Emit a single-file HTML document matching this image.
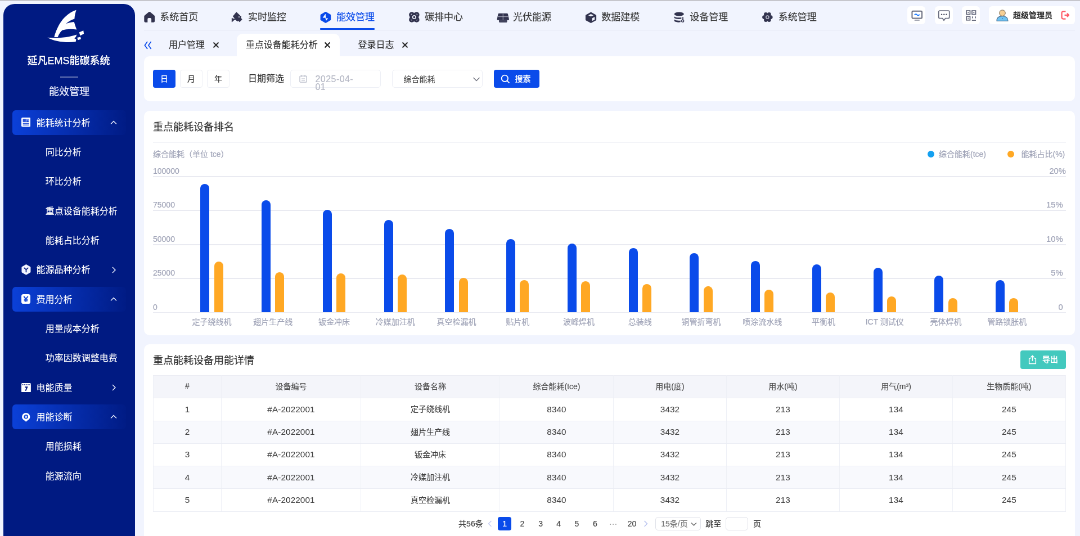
<!DOCTYPE html>
<html lang="zh-CN">
<head>
<meta charset="utf-8">
<title>延凡EMS能碳系统</title>
<style>
*{box-sizing:border-box;margin:0;padding:0}
html,body{width:1080px;height:536px;overflow:hidden;background:#f1f4fe}
body{font-family:"Liberation Sans","Noto Sans CJK SC",sans-serif;color:#333;position:relative}
#app{-webkit-text-stroke-width:0.18px;will-change:transform;position:absolute;left:0;top:0;width:1920px;height:953px;transform:scale(0.5625);transform-origin:0 0;background:#f1f4fe;overflow:hidden}
#app div,#app span,#app svg{position:absolute}
.topline{left:0;top:0;width:1920px;height:2px;background:#c6c6cc}
/* sidebar */
#side{left:6px;top:6.5px;width:234px;height:960px;background:#001a82;border-radius:20px 20px 0 0;color:#fff}
#side .title{left:-1px;width:234px;top:87.8px;text-align:center;font-size:18px;font-weight:500;-webkit-text-stroke:0.25px #fff;line-height:28px;white-space:nowrap}
#side .divider{left:101px;top:129.5px;width:32px;height:2px;background:rgba(255,255,255,.4)}
#side .module{left:0;width:234px;top:142.7px;text-align:center;font-size:18px;line-height:28px;color:#eef1ff}
.mi{-webkit-text-stroke-width:0.08px;left:16px;width:202px;height:44px;line-height:44px;font-size:16px;color:#fff;border-radius:6px;white-space:nowrap}
.mi.on{background:linear-gradient(90deg,#0b40d8 0%,rgba(11,64,216,.03) 100%)}
.mi .t{left:42.5px;top:0.7px}
.mi.sub .t{left:58.8px}
/* top nav */
.nav{top:15.7px;height:30px;line-height:30px;font-size:17px;color:#3a3a3a;white-space:nowrap}
.nav.on{color:#0a4bea}
.navul{top:50.3px;height:3.2px;background:#0a4bea;border-radius:1px}
.navline{left:256px;top:53px;width:1655px;height:1.2px;background:#e0e3ef}
.tb{top:11.2px;width:32px;height:32.3px;border-radius:6px;background:#fff}
.user{left:1758px;top:11.2px;width:153px;height:32.3px;border-radius:6px;background:#fff;font-size:14px;font-weight:500;color:#222;line-height:32px;white-space:nowrap}
/* tabs */
.tab{top:60px;height:40px;line-height:40px;font-size:16px;color:#333;white-space:nowrap}
.tab.on{background:#fff;border-radius:10px 10px 0 0}
/* cards */
.org{width:0;height:0}
.card{left:255.5px;width:1655.5px;background:#fff;border-radius:10px}
.btn{height:32px;line-height:32px;text-align:center;font-size:14px;border-radius:4px;white-space:nowrap}
.btn.w{background:#fff;border:1px solid #edeff5;color:#333;line-height:30px}
.btn.p{background:#0a4bea;color:#fff}
.inp{height:32px;border:1px solid #edeff5;border-radius:5px;background:#fff;font-size:14px;color:#333;line-height:30px;white-space:nowrap}
.h{font-size:18px;font-weight:400;-webkit-text-stroke-width:0.2px;color:#333;line-height:28px;white-space:nowrap}
.hr{left:16.5px;width:1623px;height:1px;background:#f1f2f7}
/* chart */
.grid{left:272px;width:1623px;height:1.7778px;background:#e9eaf1}
.yl,.yr,.xl,.lg{font-size:14px;line-height:20px;color:#9ea2b6;white-space:nowrap}
.yl{left:272px}
.yr{left:1795px;width:100px;text-align:right;font-size:14.8px}
.xl{width:120px;text-align:center}
.bar{width:16px;border-radius:8px 8px 0 0}
.bar.b{background:#0a4bea}
.bar.o{background:#ffa824}
/* table */
table{position:absolute;border-collapse:collapse;table-layout:fixed;font-size:14px;color:#3d3d3d}
td,th{border:1px solid #ebedf4;border-left-color:#eef0f6;border-right-color:#eef0f6;text-align:center;height:40.3px;padding:0 0 3px 0;font-weight:400;white-space:nowrap}
td.n{font-size:15.3px;letter-spacing:0.1px;padding-bottom:0.6px;-webkit-text-stroke-width:0.05px;color:#424242}
th{background:#f4f5fa;color:#4d4d4d}
tr.alt td{background:#f8f9fd}
.pg{font-size:14px;line-height:24px;color:#444;white-space:nowrap;text-align:center}

</style>
</head>
<body>
<div id="app">
<div class="topline"></div>
<div id="side">
  <svg style="left:72.22px;top:4.17px" width="78.22" height="71.11" viewBox="44 6 44 40">
    <path d="M76.4 9.8 C66 13.5 58.5 22 54.3 36.9 L57.9 36.9 C59.2 33.8 60.4 31.8 62.2 30.2 C66 28.8 72 28.6 76.8 29.4 C75.6 26.5 74.8 24 74.3 21.8 C71 22 68 22.8 66 23.6 C68.5 21.3 71.5 19.6 74.6 18.6 C74.8 15.5 75.5 12.5 76.4 9.8 Z" fill="#fff"/>
    <path d="M47.6 37.3 C57 38.3 68 37.5 76.8 34.4 C76.6 36 75.6 37.5 74.5 38.2 L76.3 39 C76.2 40 76 41 75.8 41.6 C66 42.6 55 41.5 47.6 37.3 Z" fill="#fff"/>
    <path d="M79.3 32.2 L83.5 30.3 L84 33.5 L80.3 35.6 Z M77.3 37.5 L80.6 36.6 L81.1 38.9 L78.1 39.9 Z" fill="#fff"/>
  </svg>
  <div class="title">延凡EMS能碳系统</div>
  <div class="divider"></div>
  <div class="module">能效管理</div>
<div class="mi on" style="top:189.63px"><span class="t">能耗统计分析</span><svg style="left:174px;top:17px" width="12" height="9" viewBox="0 0 12 9" fill="none" stroke="#f0f3ff" stroke-width="1.400"><path d="M1 7.500l5-5 5 5"/></svg></div>
<svg style="left:31.51px;top:202.92px" width="16.36" height="16.53" viewBox="0 0 18 18" preserveAspectRatio="none"><rect x="0" y="0" width="18" height="18" rx="2.200" fill="#fff"/><rect x="3" y="3" width="12" height="5.600" fill="#6d8cf0"/><path d="M3 3h5.500v5.600H3z" fill="#2f55d8"/><path d="M9.500 8.600l2.500-3.400 2.800 3.400z" fill="#2247cc"/><path d="M3 11.200h12M3 14.400h12" stroke="#2a52d8" stroke-width="1.500" fill="none"/></svg>
<div class="mi sub" style="top:241.95px"><span class="t">同比分析</span></div>
<div class="mi sub" style="top:294.27px"><span class="t">环比分析</span></div>
<div class="mi sub" style="top:346.59px"><span class="t">重点设备能耗分析</span></div>
<div class="mi sub" style="top:398.91px"><span class="t">能耗占比分析</span></div>
<div class="mi " style="top:451.23px"><span class="t">能源品种分析</span><svg style="left:176px;top:16px" width="9" height="12" viewBox="0 0 9 12" fill="none" stroke="#f0f3ff" stroke-width="1.400"><path d="M2 1l5 5-5 5"/></svg></div>
<svg style="left:31.69px;top:463.72px" width="16.89" height="18.67" viewBox="0 0 19 21" preserveAspectRatio="none"><path d="M9.500 1.200 17.300 5.700v9.600L9.500 19.800 1.700 15.300V5.700z" fill="#f3f5ff" stroke="#f3f5ff" stroke-width="2.400" stroke-linejoin="round"/><path d="M5.800 7.200l3.700 3.300 3.700-3.300M9.500 10.500v4.700" stroke="#00157f" stroke-width="1.900" fill="none" stroke-linecap="round"/></svg>
<div class="mi on" style="top:503.55px"><span class="t">费用分析</span><svg style="left:174px;top:17px" width="12" height="9" viewBox="0 0 12 9" fill="none" stroke="#f0f3ff" stroke-width="1.400"><path d="M1 7.500l5-5 5 5"/></svg></div>
<svg style="left:32.22px;top:516.88px" width="16.00" height="17.07" viewBox="0 0 18 19" preserveAspectRatio="none"><rect x="0" y="0" width="18" height="19" rx="4" fill="#fff"/><path d="M4.800 4.200 9 9.200l4.200-5" stroke="#0a3fd6" stroke-width="2.200" fill="none"/><path d="M9 9.200v6M5.200 10h7.600M5.200 13h7.600" stroke="#0a3fd6" stroke-width="1.700" fill="none"/></svg>
<div class="mi sub" style="top:555.87px"><span class="t">用量成本分析</span></div>
<div class="mi sub" style="top:608.19px"><span class="t">功率因数调整电费</span></div>
<div class="mi " style="top:660.51px"><span class="t">电能质量</span><svg style="left:176px;top:16px" width="9" height="12" viewBox="0 0 9 12" fill="none" stroke="#f0f3ff" stroke-width="1.400"><path d="M2 1l5 5-5 5"/></svg></div>
<svg style="left:31.69px;top:674.21px" width="16.89" height="16.53" viewBox="0 0 19 18" preserveAspectRatio="none"><rect x="0" y="0" width="19" height="18" rx="1.800" fill="#fff"/><path d="M1.500 3.200h16" stroke="#00157f" stroke-width="1.500" stroke-dasharray="2.200 1.400"/><path d="M7 6.800h6.200L9.500 15H7.300l2.500-6H7z" fill="#00157f"/></svg>
<div class="mi on" style="top:712.83px"><span class="t">用能诊断</span><svg style="left:174px;top:17px" width="12" height="9" viewBox="0 0 12 9" fill="none" stroke="#f0f3ff" stroke-width="1.400"><path d="M1 7.500l5-5 5 5"/></svg></div>
<svg style="left:33.29px;top:727.54px" width="14.40" height="15.82" viewBox="0 0 16 18" preserveAspectRatio="none"><path d="M8 0a8 8 0 0 1 8 8c0 3.300-2 6-5 7.300L8 18 5 15.300C2 14 0 11.300 0 8a8 8 0 0 1 8-8z" fill="#fff"/><circle cx="8" cy="7.800" r="3.300" fill="none" stroke="#0a3fd6" stroke-width="1.900"/><circle cx="8" cy="7.800" r="1.300" fill="#b9c8f8"/></svg>
<div class="mi sub" style="top:765.15px"><span class="t">用能损耗</span></div>
<div class="mi sub" style="top:817.47px"><span class="t">能源流向</span></div>
</div>

<svg style="left:254.22px;top:17.78px" width="24.89" height="24.89" viewBox="143 10 14 14"><path d="M149.600 11.700C150 11.700 150.300 11.800 150.600 12.100L154.300 15.200C154.700 15.500 154.900 15.900 154.900 16.400V21C154.900 21.700 154.400 22.200 153.700 22.200H151.500V19C151.500 18.400 151 17.900 150.400 17.900H148.800C148.200 17.900 147.700 18.400 147.700 19V22.200H145.500C144.800 22.200 144.300 21.700 144.300 21V16.400C144.300 15.900 144.500 15.500 144.900 15.200L148.600 12.100C148.900 11.800 149.200 11.700 149.600 11.700Z" fill="#32334e"/></svg>
<div class="nav" style="left:284.30px">系统首页</div>
<svg style="left:408.89px;top:17.78px" width="24.89" height="24.89" viewBox="230 10 14 14"><path d="M236.350 12.100 241.200 16.700 240.600 17.600 241.900 19.400 239.500 21.700 238.200 20.500 237.100 21.100 233 16.200Z" fill="#32334e" stroke="#32334e" stroke-width="0.500" stroke-linejoin="round"/><path d="M231.800 18 234.900 19.200 231.800 21.900Z" fill="#32334e" stroke="#32334e" stroke-width="0.300" stroke-linejoin="round"/><path d="M234 18.700 235.500 19.600" stroke="#32334e" stroke-width="0.900"/><path d="M238.300 16.300h1.500v1.100h-1.500z" fill="#b9bbcc"/></svg>
<div class="nav" style="left:440.92px">实时监控</div>
<svg style="left:567.11px;top:17.78px" width="24.89" height="24.89" viewBox="319 10 14 14"><path d="M325.700 12.400 330.200 15V19.500L325.700 22.100 321.200 19.500V15Z" fill="#0a4bea" stroke="#0a4bea" stroke-width="1.500" stroke-linejoin="round"/><path d="M325.500 14 323 17.500H325.500L326.300 20.300 327.900 18.300H325.900Z" fill="#fff" stroke="#fff" stroke-width="0.300" stroke-linejoin="round"/></svg>
<div class="nav on" style="left:598.08px">能效管理</div>
<svg style="left:723.56px;top:17.78px" width="24.89" height="24.89" viewBox="407 10 14 14"><g fill="#32334e"><circle cx="411.500" cy="14.600" r="2.750"/><circle cx="416.400" cy="14.600" r="2.750"/><circle cx="411.500" cy="19.500" r="2.750"/><circle cx="416.400" cy="19.500" r="2.750"/><rect x="409.600" y="12.700" width="8.700" height="8.700" rx="1.500"/></g><circle cx="413.950" cy="17.050" r="1.550" fill="none" stroke="#f1f4fe" stroke-width="0.850"/><path d="M410.700 14.600 411.700 13.800M416.300 13.800 417.200 14.600M417.200 19.500 416.300 20.300M411.700 20.300 410.700 19.500" stroke="#f1f4fe" stroke-width="0.600" opacity=".85"/></svg>
<div class="nav" style="left:755.06px">碳排中心</div>
<svg style="left:881.78px;top:19.56px" width="24.89" height="23.11" viewBox="496 11 14 13"><path d="M499 13.100H506.800C507.300 13.100 507.600 13.300 507.800 13.800L508.900 18.900C509 19.400 508.700 19.800 508.200 19.800H497.600C497.100 19.800 496.800 19.400 496.900 18.900L498 13.800C498.200 13.300 498.500 13.100 499 13.100Z" fill="#32334e"/><path d="M497.700 16.450H508.100M502.900 13.500V19.600" stroke="#f1f4fe" stroke-width="0.450" opacity=".8"/><path d="M498.800 19.800H507V21.300C507 21.900 506.600 22.300 506 22.300H499.800C499.200 22.300 498.800 21.900 498.800 21.300Z" fill="#32334e" opacity=".92"/></svg>
<div class="nav" style="left:912.03px">光伏能源</div>
<svg style="left:1038.22px;top:17.78px" width="24.89" height="24.89" viewBox="584 10 14 14"><path d="M591.050 12.700 595.800 15.300V19.700L591.050 22.300 586.300 19.700V15.300Z" fill="#32334e" stroke="#32334e" stroke-width="1.300" stroke-linejoin="round"/><path d="M591.050 13.900 593.700 15.200 591.050 16.400 588.400 15.200Z" fill="#f1f4fe"/><path d="M592.200 18.100 594.800 16.800V19.500L592.200 20.900Z" fill="#f1f4fe"/></svg>
<div class="nav" style="left:1069.19px">数据建模</div>
<svg style="left:1194.67px;top:17.78px" width="24.89" height="24.89" viewBox="672 10 14 14"><ellipse cx="678.900" cy="13.900" rx="4.850" ry="2" fill="#32334e"/><path d="M674.050 16.300C675.500 17.600 679 17.700 681.200 17.300V18.700C679 19.200 675.500 19 674.050 17.900Z" fill="#32334e"/><path d="M674.050 19.300C675.500 20.500 678.500 20.700 680.300 20.400V22C678.500 22.400 675.500 22.200 674.050 21Z" fill="#32334e"/><path d="M682.700 16.900V20" stroke="#32334e" stroke-width="1"/><circle cx="682.500" cy="20.800" r="1.100" fill="#f1f4fe" stroke="#32334e" stroke-width="0.800"/></svg>
<div class="nav" style="left:1226.34px">设备管理</div>
<svg style="left:1352.89px;top:17.78px" width="24.89" height="24.89" viewBox="761 10 14 14"><g fill="#32334e"><circle cx="767.400" cy="17.050" r="3.600"/><circle cx="770.700" cy="17.050" r="1.900"/><circle cx="764.100" cy="17.050" r="1.900"/><circle cx="769.050" cy="14.200" r="1.900"/><circle cx="765.750" cy="14.200" r="1.900"/><circle cx="769.050" cy="19.900" r="1.900"/><circle cx="765.750" cy="19.900" r="1.900"/></g><circle cx="767.400" cy="17.050" r="1.450" fill="none" stroke="#c9cbd9" stroke-width="0.750"/></svg>
<div class="nav" style="left:1383.68px">系统管理</div>
<div class="navul" style="left:569.07px;width:96.71px"></div>
<div class="navline"></div>
<div class="tb" style="left:1612.5px"><svg style="left:7.6px;top:6.8px" width="20.5" height="20" viewBox="0 0 20 20"><rect x="1.2" y="1.8" width="17.600" height="12.800" rx="1.400" fill="#fff" stroke="#666a7c" stroke-width="2"/><path d="M5.500 8.800C7 6.800 8.500 6.800 10 8.300 11.500 9.800 13 9.800 14.500 7.800" fill="none" stroke="#1677ff" stroke-width="1.900"/><path d="M5.500 17.800h9" stroke="#7b7e8e" stroke-width="1.700"/></svg></div>
<div class="tb" style="left:1661.5px"><svg style="left:5.200px;top:6px" width="22.500" height="22" viewBox="0 0 22 22"><path d="M3.500 2h15a2 2 0 0 1 2 2v9.500a2 2 0 0 1-2 2h-5l-2.700 3.800L8.200 15.500H3.500a2 2 0 0 1-2-2V4a2 2 0 0 1 2-2z" fill="#fff" stroke="#666a7c" stroke-width="1.700" stroke-linejoin="round"/><circle cx="6.800" cy="8.800" r="1.250" fill="#4a4d60"/><circle cx="11" cy="8.800" r="1.250" fill="#4a4d60"/><circle cx="15.200" cy="8.800" r="1.250" fill="#4a4d60"/></svg></div>
<div class="tb" style="left:1710px"><svg style="left:7px;top:6.800px" width="18.500" height="19.500" viewBox="0 0 18 19" fill="none" stroke="#666a7c" stroke-width="1.700"><rect x="1" y="1" width="6.300" height="6.300"/><rect x="10.700" y="1" width="6.300" height="6.300"/><rect x="1" y="11" width="6.300" height="6.300"/><path d="M3.200 4.150h2M12.900 4.150h2M3.200 14.150h2" stroke-width="1.600"/><path d="M10.500 17.800h7" stroke-width="1.600"/><path d="M11.500 11v3.200M16.500 11v3.200" stroke-width="1.700"/></svg></div>
<div class="user">
  <svg style="left:13px;top:5px" width="22" height="22" viewBox="0 0 22 22"><path d="M1 21.200C1 15.500 4.500 12.800 11 12.800 17.500 12.800 21 15.500 21 21.200Z" fill="#6ec3f3" stroke="#4a6a8c" stroke-width="1.100"/><circle cx="11" cy="7.200" r="5.300" fill="#f6cf94" stroke="#8a7a62" stroke-width="1.100"/><circle cx="11" cy="17" r="0.900" fill="#3f79b8"/></svg>
  <span style="left:43px;top:0;-webkit-text-stroke-width:0.3px">超级管理员</span>
  <svg style="left:127.500px;top:8.300px" width="15.500" height="15.800" viewBox="0 0 15.500 16" fill="none" stroke="#ff5c68" stroke-width="2.300"><path d="M8.500 1.300H4a2.500 2.500 0 0 0-2.500 2.500v8.400A2.500 2.500 0 0 0 4 14.700h4.500" /><path d="M6.500 8h7.500M11 4.800l3.300 3.200L11 11.200" stroke-linejoin="round"/></svg>
</div>
<!-- tabs -->
<svg style="left:254.5px;top:71.5px" width="16" height="17" viewBox="0 0 17 18" fill="none" stroke="#0a4bea" stroke-width="1.8"><path d="M7.500 2 2.500 9l5 7M14.500 2 9.500 9l5 7"/></svg>
<div class="tab" style="left:284px;width:124px"><span style="left:16px;top:0">用户管理</span><svg class="x" style="left:94px;top:14px" width="12" height="12" viewBox="0 0 12 12"><path d="M1.500 1.500l9 9M10.500 1.500l-9 9" stroke="#222" stroke-width="2" fill="none"/></svg></div>
<div class="tab on" style="left:421.4px;width:183px"><span style="left:15.4px;top:0">重点设备能耗分析</span><svg class="x" style="left:154.4px;top:14px" width="12" height="12" viewBox="0 0 12 12"><path d="M1.500 1.500l9 9M10.500 1.500l-9 9" stroke="#222" stroke-width="2" fill="none"/></svg></div>
<div class="tab" style="left:620.5px;width:124px"><span style="left:16px;top:0">登录日志</span><svg class="x" style="left:93px;top:14px" width="12" height="12" viewBox="0 0 12 12"><path d="M1.500 1.500l9 9M10.500 1.500l-9 9" stroke="#222" stroke-width="2" fill="none"/></svg></div>

<!-- filter card -->
<div class="card" style="top:99.500px;height:80.400px"></div>
<div class="org" style="left:255.5px;top:99.5px">
  <div class="btn p" style="left:16.500px;top:24px;width:40px">日</div>
  <div class="btn w" style="left:64.500px;top:24px;width:40px">月</div>
  <div class="btn w" style="left:112.500px;top:24px;width:40px">年</div>
  <div style="left:185.500px;top:24.500px;font-size:16px;line-height:32px;color:#333;white-space:nowrap">日期筛选</div>
  <div class="inp" style="left:260.500px;top:24.500px;width:161px">
    <svg style="left:15px;top:8px" width="14" height="14" viewBox="0 0 14 14" fill="none" stroke="#b4b8c6" stroke-width="1.2"><rect x="1" y="2.200" width="12" height="11" rx="1"/><path d="M4 .600v3M10 .600v3M4 7h6M4 10h6"/></svg>
    <div style="left:43.5px;top:9px;width:72px;font-size:16px;letter-spacing:0.45px;line-height:14px;color:#b4b7c4;white-space:normal;word-break:break-all">2025-04-01</div>
  </div>
  <div class="inp" style="left:441.500px;top:24.500px;width:161px">
    <span style="left:19.5px;top:0.5px;font-size:14px;color:#4a4a4a">综合能耗</span>
    <svg style="left:142px;top:11px" width="14" height="10" viewBox="0 0 14 10" fill="none" stroke="#70737f" stroke-width="1.500"><path d="M1.500 2l5.500 5.500L12.500 2"/></svg>
  </div>
  <div class="btn p" style="left:622px;top:24.500px;width:81px">
    <svg style="left:12.5px;top:8px" width="17" height="17" viewBox="0 0 15 15" fill="none" stroke="#fff" stroke-width="1.6"><circle cx="6.500" cy="6.500" r="5"/><path d="M10.200 10.200l3.500 3.500"/></svg>
    <span style="left:38px;top:0;font-weight:500">搜索</span>
  </div>
</div>
<!-- chart card -->
<div class="card" style="top:197.400px;height:398.200px"></div>
<div class="org" id="chart" style="left:255.5px;top:195.5px">
  <div class="h" style="left:16.500px;top:16.300px">重点能耗设备排名</div>
  <div class="hr" style="top:57.500px"></div>
  <div class="lg" style="left:16.500px;top:68.300px">综合能耗（单位 tce）</div>
  <div style="left:1393.500px;top:72.300px;width:12px;height:12px;border-radius:50%;background:#14a0f0"></div>
  <div class="lg" style="left:1413.500px;top:68.300px">综合能耗(tce)</div>
  <div style="left:1535.500px;top:72.300px;width:12px;height:12px;border-radius:50%;background:#ffa824"></div>
  <div class="lg" style="left:1560px;top:68.300px">能耗占比(%)</div>
  <div id="plot" style="left:-255.500px;top:-195.500px;width:1920px;height:600px">
<div class="grid" style="top:312.8889px"></div>
<div class="grid" style="top:373.3333px"></div>
<div class="grid" style="top:433.7778px"></div>
<div class="grid" style="top:494.2222px"></div>
<div class="grid" style="top:554.6667px"></div>
<div class="yl" style="top:294.0px">100000</div>
<div class="yl" style="top:354.44px">75000</div>
<div class="yl" style="top:414.89px">50000</div>
<div class="yl" style="top:475.33px">25000</div>
<div class="yl" style="top:535.78px">0</div>
<div class="yr" style="top:294.0px;left:1795px">20%</div>
<div class="yr" style="top:354.44px;left:1789.7px">15%</div>
<div class="yr" style="top:414.89px;left:1789.7px">10%</div>
<div class="yr" style="top:475.33px;left:1789.7px">5%</div>
<div class="yr" style="top:535.78px;left:1789.7px">0</div>
<div class="bar b" style="left:356.44px;top:327.11px;height:227.56px"></div>
<div class="bar o" style="left:380.62px;top:464.53px;height:90.13px"></div>
<div class="xl" style="left:316.53px;top:561.56px">定子绕线机</div>
<div class="bar b" style="left:465.19px;top:355.56px;height:199.11px"></div>
<div class="bar o" style="left:489.37px;top:484.09px;height:70.58px"></div>
<div class="xl" style="left:425.28px;top:561.56px">翅片生产线</div>
<div class="bar b" style="left:573.94px;top:373.33px;height:181.33px"></div>
<div class="bar o" style="left:598.12px;top:485.87px;height:68.8px"></div>
<div class="xl" style="left:534.03px;top:561.56px">钣金冲床</div>
<div class="bar b" style="left:682.68px;top:391.11px;height:163.56px"></div>
<div class="bar o" style="left:706.86px;top:487.64px;height:67.02px"></div>
<div class="xl" style="left:642.77px;top:561.56px">冷媒加注机</div>
<div class="bar b" style="left:791.43px;top:407.11px;height:147.56px"></div>
<div class="bar o" style="left:815.61px;top:494.22px;height:60.44px"></div>
<div class="xl" style="left:751.52px;top:561.56px">真空检漏机</div>
<div class="bar b" style="left:900.18px;top:425.42px;height:129.24px"></div>
<div class="bar o" style="left:924.36px;top:498.31px;height:56.36px"></div>
<div class="xl" style="left:860.27px;top:561.56px">贴片机</div>
<div class="bar b" style="left:1008.92px;top:433.24px;height:121.42px"></div>
<div class="bar o" style="left:1033.1px;top:500.27px;height:54.4px"></div>
<div class="xl" style="left:969.01px;top:561.56px">波峰焊机</div>
<div class="bar b" style="left:1117.67px;top:441.24px;height:113.42px"></div>
<div class="bar o" style="left:1141.85px;top:504.89px;height:49.78px"></div>
<div class="xl" style="left:1077.76px;top:561.56px">总装线</div>
<div class="bar b" style="left:1226.42px;top:449.78px;height:104.89px"></div>
<div class="bar o" style="left:1250.6px;top:508.98px;height:45.69px"></div>
<div class="xl" style="left:1186.51px;top:561.56px">铜管折弯机</div>
<div class="bar b" style="left:1335.16px;top:464.0px;height:90.67px"></div>
<div class="bar o" style="left:1359.34px;top:514.84px;height:39.82px"></div>
<div class="xl" style="left:1295.25px;top:561.56px">喷涂流水线</div>
<div class="bar b" style="left:1443.91px;top:469.87px;height:84.8px"></div>
<div class="bar o" style="left:1468.09px;top:520.18px;height:34.49px"></div>
<div class="xl" style="left:1404.0px;top:561.56px">平衡机</div>
<div class="bar b" style="left:1552.66px;top:476.44px;height:78.22px"></div>
<div class="bar o" style="left:1576.84px;top:526.76px;height:27.91px"></div>
<div class="xl" style="left:1512.75px;top:561.56px">ICT 测试仪</div>
<div class="bar b" style="left:1661.4px;top:489.6px;height:65.07px"></div>
<div class="bar o" style="left:1685.58px;top:530.13px;height:24.53px"></div>
<div class="xl" style="left:1621.49px;top:561.56px">壳体焊机</div>
<div class="bar b" style="left:1770.15px;top:498.31px;height:56.36px"></div>
<div class="bar o" style="left:1794.33px;top:530.13px;height:24.53px"></div>
<div class="xl" style="left:1730.24px;top:561.56px">管路锁胀机</div>
  </div>
</div>
<!-- table card -->
<div class="card" style="top:612px;height:360px"></div>
<div class="org" style="left:255.5px;top:610px">
  <div class="h" style="left:16.500px;top:16.900px">重点能耗设备用能详情</div>
  <div class="btn" style="left:1558.800px;top:13px;width:80.700px;height:33px;line-height:33px;background:#43c9be;color:#fff"><svg style="left:12.700px;top:8px" width="17" height="17" viewBox="0 0 16 16" fill="none" stroke="#fff" stroke-width="1.400"><path d="M5 6H2.500v8.500h11V6H11M8 10V1.500M5 4.200 8 1.300l3 2.900"/></svg><span style="left:38.700px;top:0;font-weight:500">导出</span></div>
  <table style="left:16.500px;top:57px;width:1621.7px">
    <colgroup><col style="width:121px"><col style="width:248px"><col style="width:247px"><col style="width:202px"><col style="width:201px"><col style="width:201px"><col style="width:201px"><col style="width:200.7px"></colgroup>
    <tr><th>#</th><th>设备编号</th><th>设备名称</th><th>综合能耗(tce)</th><th>用电(度)</th><th>用水(吨)</th><th>用气(m³)</th><th>生物质能(吨)</th></tr>
<tr><td class="n">1</td><td class="n">#A-2022001</td><td>定子绕线机</td><td class="n">8340</td><td class="n">3432</td><td class="n">213</td><td class="n">134</td><td class="n">245</td></tr>
<tr class="alt"><td class="n">2</td><td class="n">#A-2022001</td><td>翅片生产线</td><td class="n">8340</td><td class="n">3432</td><td class="n">213</td><td class="n">134</td><td class="n">245</td></tr>
<tr><td class="n">3</td><td class="n">#A-2022001</td><td>钣金冲床</td><td class="n">8340</td><td class="n">3432</td><td class="n">213</td><td class="n">134</td><td class="n">245</td></tr>
<tr class="alt"><td class="n">4</td><td class="n">#A-2022001</td><td>冷媒加注机</td><td class="n">8340</td><td class="n">3432</td><td class="n">213</td><td class="n">134</td><td class="n">245</td></tr>
<tr><td class="n">5</td><td class="n">#A-2022001</td><td>真空检漏机</td><td class="n">8340</td><td class="n">3432</td><td class="n">213</td><td class="n">134</td><td class="n">245</td></tr>
  </table>
<div class="pg" style="left:559.6px;top:309.4px;color:#444">共56条</div>
<svg style="left:611.6px;top:315.4px" width="8" height="12" viewBox="0 0 8 12" fill="none" stroke="#c6cdf2" stroke-width="1.500"><path d="M6.500 1l-5 5 5 5"/></svg>
<div class="pg" style="left:629.7px;top:309.4px;width:24px;height:24px;border-radius:4px;background:#0a4bea;color:#fff">1</div>
<div class="pg" style="left:658.0px;top:309.4px;width:30px;color:#444">2</div>
<div class="pg" style="left:690.6px;top:309.4px;width:30px;color:#444">3</div>
<div class="pg" style="left:722.7px;top:309.4px;width:30px;color:#444">4</div>
<div class="pg" style="left:754.9px;top:309.4px;width:30px;color:#444">5</div>
<div class="pg" style="left:787.3px;top:309.4px;width:30px;color:#444">6</div>
<div class="pg" style="left:819.6px;top:309.4px;width:30px;color:#999">···</div>
<div class="pg" style="left:853.1px;top:309.4px;width:30px;color:#444">20</div>
<svg style="left:888.6px;top:315.4px" width="8" height="12" viewBox="0 0 8 12" fill="none" stroke="#b9c3ef" stroke-width="1.500"><path d="M1.500 1l5 5-5 5"/></svg>
<div class="inp" style="border-color:#dfe1e8;left:909.8px;top:309.4px;width:80.5px;height:24px;line-height:22px"><span style="left:9px;top:0;color:#777;font-size:14px">15条/页</span><svg style="left:62px;top:8px" width="11" height="8" viewBox="0 0 11 8" fill="none" stroke="#666" stroke-width="1.400"><path d="M1 1.500l4.500 4.500L10 1.500"/></svg></div>
<div class="pg" style="left:998.7px;top:309.4px;color:#333">跳至</div>
<div class="inp" style="border-color:#dfe1e8;left:1034.5px;top:309.4px;width:40px;height:24px"></div>
<div class="pg" style="left:1083.5px;top:309.4px;color:#333">页</div>
</div>

</div>
</body>
</html>
